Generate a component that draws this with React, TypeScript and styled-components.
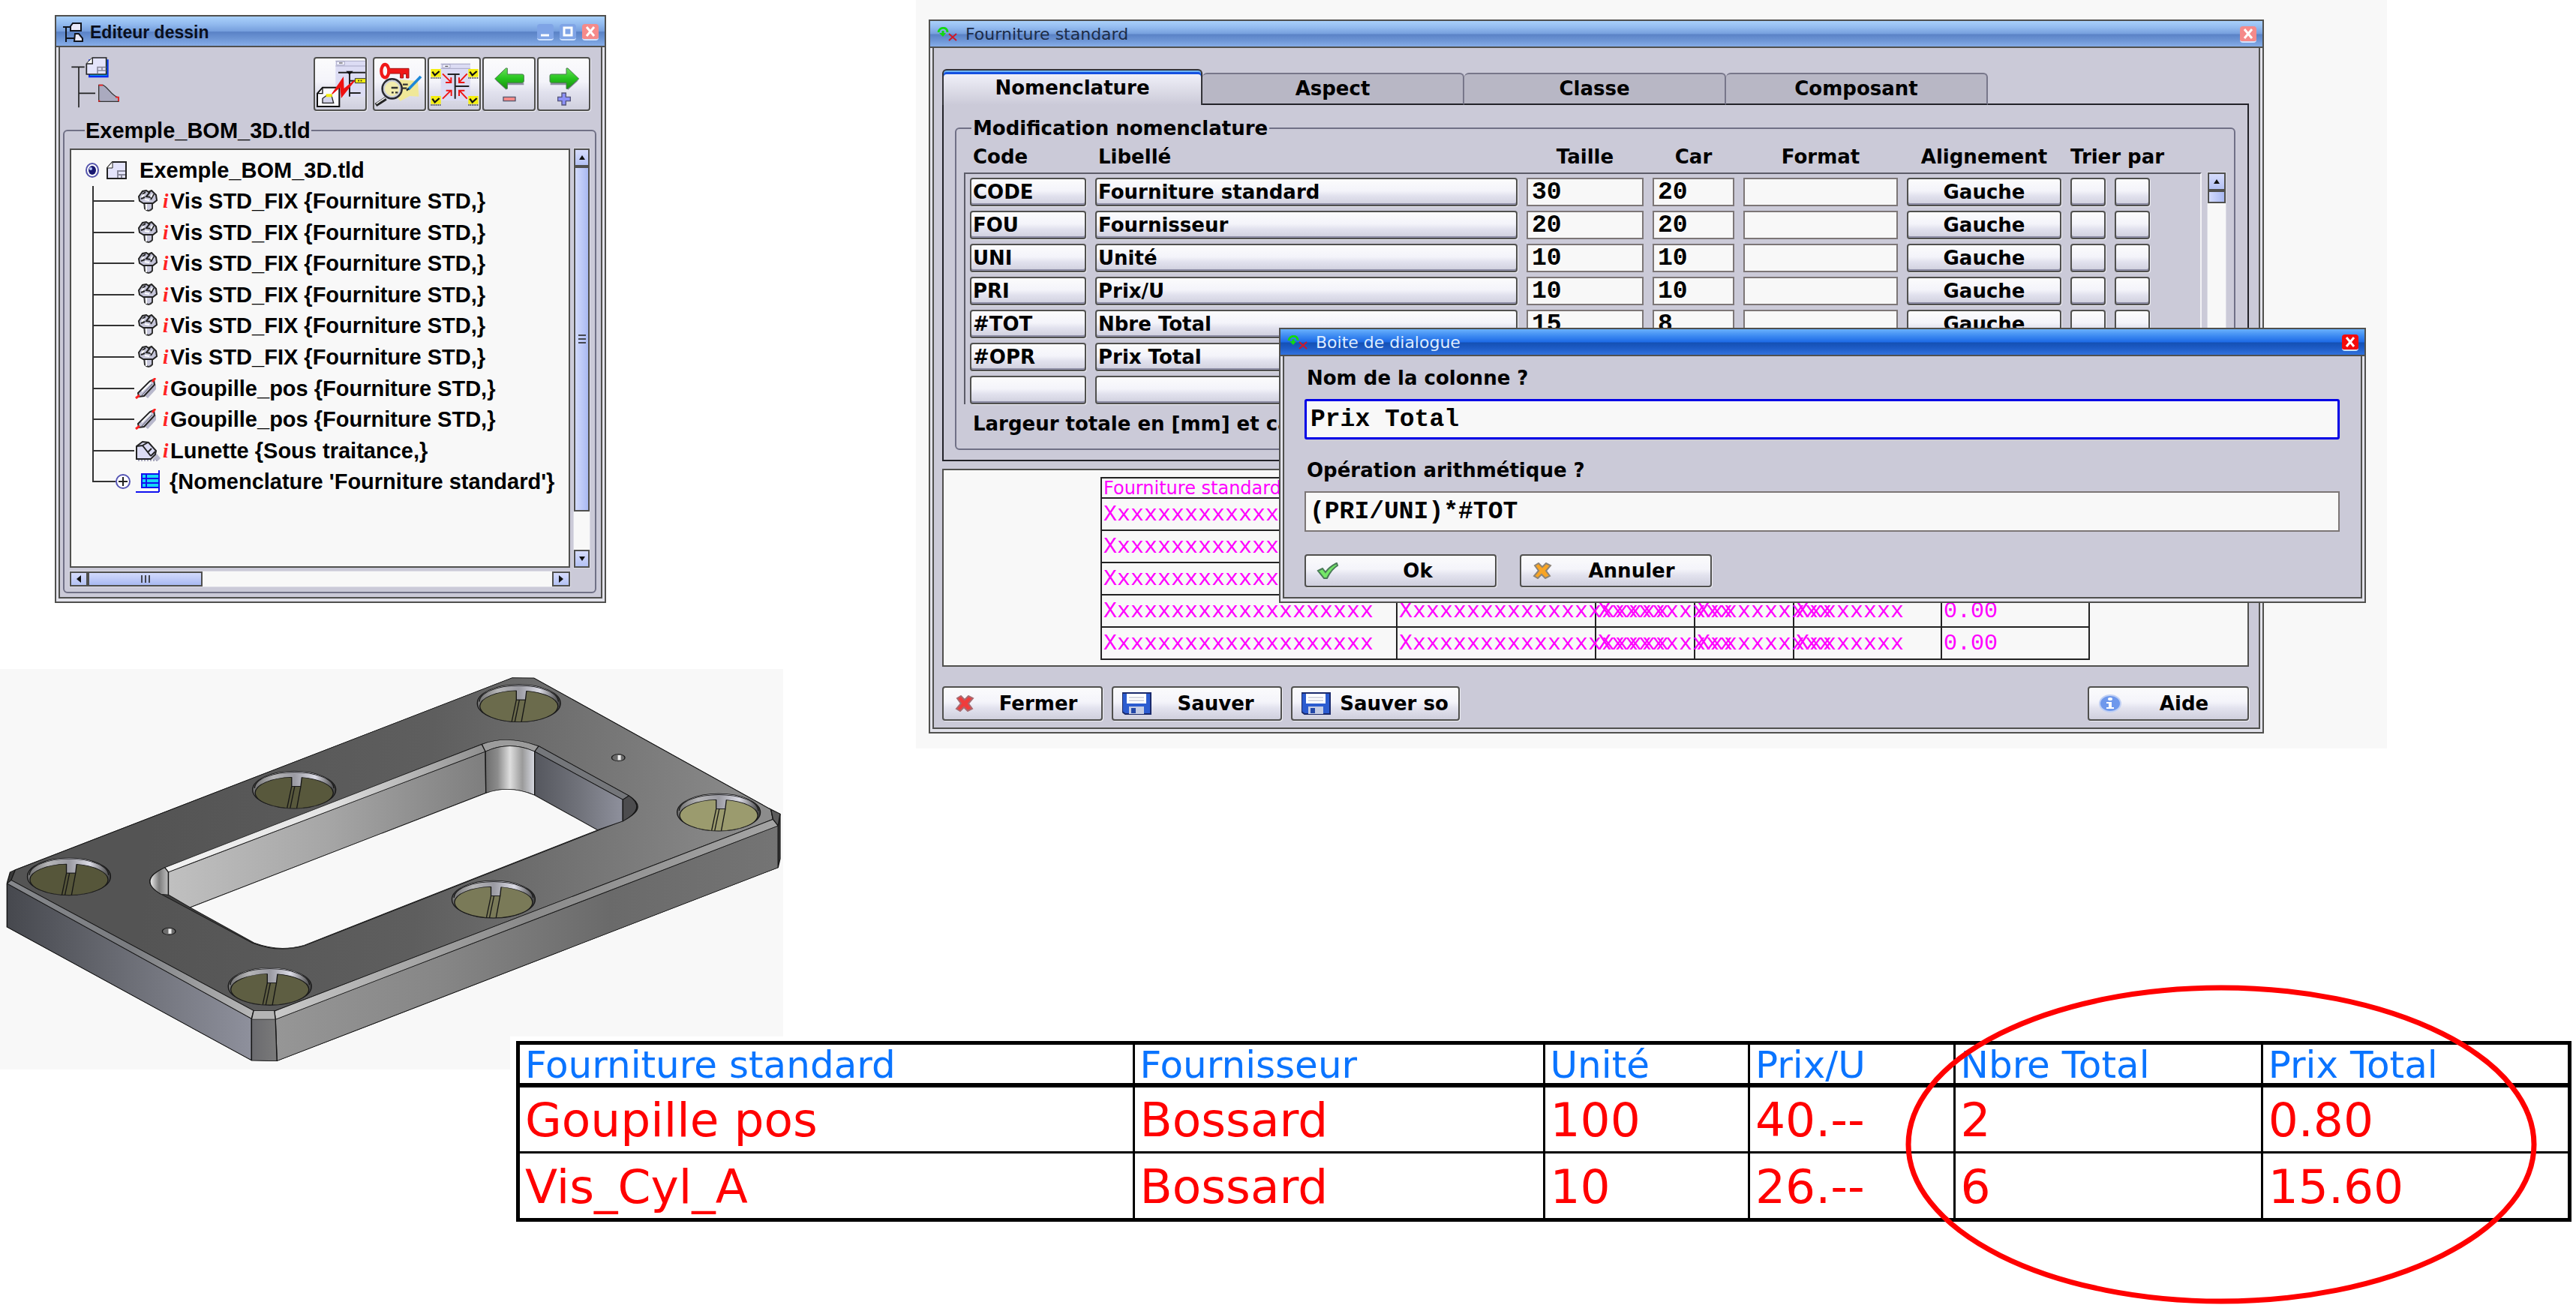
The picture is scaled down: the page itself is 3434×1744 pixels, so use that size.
import React from "react";
import styled, { createGlobalStyle, css } from "styled-components";

const GlobalStyle = createGlobalStyle`
  *, *::before, *::after { box-sizing: border-box; }
  body { margin: 0; background: #fff; color: #000; font-family: "DejaVu Sans", sans-serif; }
  button, input { font: inherit; color: inherit; margin: 0; }
  svg { display: block; flex: none; }
`;

const face = "#cbcad8";
const paper = "#f8f8f8";
const line = "#50504e";
const arial = `"Liberation Sans", Arial, sans-serif`;
const mono = `"Liberation Mono", "Courier New", monospace`;

/* ---------- page ---------- */

const Page = styled.main`
  overflow: hidden;
`;

const Workspace = styled.div`
  display: grid;
  grid-template-columns: 1221px minmax(0, 1fr);
  align-items: start;
`;

const LeftColumn = styled.div`
  display: flex;
  flex-direction: column;
  align-items: flex-start;
  gap: 88px;
  padding-top: 20px;
`;

const Stage = styled.section`
  position: relative;
  margin-right: 252px;
  padding: 26px 164px 20px 17px;
  background: ${paper};
`;

/* ---------- window frame ---------- */

const Frame = styled.section`
  display: flex;
  flex-direction: column;
  padding: 0 3px 4px;
  background: #e2e2ea;
  border: 2px solid ${line};
`;

const EditorFrame = styled(Frame)`
  width: 735px;
  margin-left: 73px;
`;

const DialogFrame = styled(Frame)`
  position: absolute;
  top: 437px;
  left: 484px;
  right: 28px;
`;

const TitleBar = styled.header<{ $active?: boolean; $tall?: boolean }>`
  display: flex;
  align-items: center;
  gap: 8px;
  height: ${(p) => (p.$tall ? 41 : 36)}px;
  margin: 0 -3px;
  padding: 2px 8px 0 9px;
  border-bottom: 2px solid ${line};
  background: ${(p) =>
    p.$active
      ? "linear-gradient(#69b0fc 0%, #3f8cf2 25%, #1d6ae6 50%, #1450b4 53%, #1e5cc6 75%, #3272de 100%)"
      : "linear-gradient(#a9d0fa 0%, #93bbef 25%, #769fdd 50%, #5a82c6 53%, #6c94d4 75%, #86ade8 100%)"};
`;

const Title = styled.h2<{ $active?: boolean; $bold?: boolean }>`
  flex: 1;
  margin: 0;
  font-size: 22px;
  font-weight: 400;
  line-height: 30px;
  color: ${(p) => (p.$active ? "#dcecff" : "#1c2c48")};
  ${(p) =>
    p.$bold &&
    css`
      font-family: ${arial};
      font-size: 23px;
      font-weight: 700;
      color: #0a0f1c;
    `}
`;

const WindowButton = styled.button<{ $tone: "blue" | "pale" | "red" }>`
  display: flex;
  align-items: center;
  justify-content: center;
  width: 22px;
  height: 22px;
  padding: 0;
  border: 0;
  border-bottom: 2px solid #cfe2ff;
  border-radius: 4px;
  background: ${(p) => ({ blue: "#7fa4e6", pale: "#f58a8a", red: "#f40b0b" })[p.$tone]};
`;

const Body = styled.div`
  display: flex;
  flex-direction: column;
  background: ${face};
  border: 2px solid ${line};
  border-top: 0;
`;

/* ---------- shared controls ---------- */

const raised = css`
  background: linear-gradient(#fbfbfc 0%, #f4f4fa 45%, #e2e2ee 65%, #cfcfdd 100%);
  border: 2px solid ${line};
  border-radius: 4px;
  box-shadow: 1px 1px 0 #eeeef4;
`;

const Group = styled.fieldset<{ $pad: string }>`
  min-width: 0;
  margin: 0;
  padding: ${(p) => p.$pad};
  border: 2px solid #707086;
  border-radius: 6px;
`;

const Track = styled.div<{ $row?: boolean }>`
  display: flex;
  flex-direction: ${(p) => (p.$row ? "row" : "column")};
  background: ${paper};
  outline: 1px solid #dcdce6;
`;

const ScrollButton = styled.button<{ $row?: boolean }>`
  display: flex;
  align-items: center;
  justify-content: center;
  width: ${(p) => (p.$row ? "24px" : "auto")};
  height: ${(p) => (p.$row ? "auto" : "24px")};
  padding: 0;
  border: 2px solid ${line};
  background: linear-gradient(#d6dcfc, #b4c2f4);
`;

const Thumb = styled.div<{ $row?: boolean; $size: number }>`
  display: flex;
  align-items: center;
  justify-content: center;
  width: ${(p) => (p.$row ? `${p.$size}px` : "auto")};
  height: ${(p) => (p.$row ? "auto" : `${p.$size}px`)};
  border: 2px solid ${line};
  background: ${(p) =>
    p.$row ? "linear-gradient(#d2dafc, #a9b9f2)" : "linear-gradient(90deg, #d2dafc, #a9b9f2)"};
`;

const Spring = styled.div`
  flex: 1;
`;

/* ---------- drawing editor ---------- */

const EditorTop = styled.div`
  display: flex;
  align-items: flex-start;
  justify-content: space-between;
  padding: 13px 14px 10px 14px;
`;

const Toolbar = styled.div`
  display: flex;
  gap: 2px;
`;

const Tool = styled.button<{ $apart?: boolean }>`
  ${raised}
  width: 71px;
  height: 72px;
  margin-right: ${(p) => (p.$apart ? 6 : 0)}px;
  padding: 0;
  overflow: hidden;
`;

const TreeGroup = styled.div`
  padding: 0 6px 5px 4px;
`;

const TreeLegend = styled.legend`
  margin-left: 20px;
  padding: 0 1px;
  font: 700 29px/32px ${arial};
`;

const TreeScroller = styled.div`
  display: grid;
  grid-template-columns: minmax(0, 1fr) 21px;
  grid-template-rows: 559px 20px;
  gap: 5px;
`;

const Tree = styled.ul`
  display: grid;
  grid-auto-rows: 1fr;
  margin: 0;
  padding: 6px 0 92px 18px;
  list-style: none;
  background: ${paper};
  border: 2px solid ${line};
  font: 700 29px/34px ${arial};
`;

const TreeItem = styled.li`
  display: flex;
  align-items: center;
  white-space: pre;
`;

const Branch = styled.span<{ $last?: boolean }>`
  align-self: stretch;
  width: ${(p) => (p.$last ? 31 : 56)}px;
  margin-left: 10px;
  background:
    linear-gradient(#333, #333) 0 50% / 100% 2px no-repeat,
    linear-gradient(#333, #333) 0 0 / 2px ${(p) => (p.$last ? "50%" : "100%")} no-repeat;
`;

const InfoMark = styled.i`
  width: 10px;
  font: italic 700 27px/34px "Liberation Serif", serif;
  color: #f22;
`;

/* ---------- nomenclature window ---------- */

const Tabs = styled.div`
  display: flex;
  align-items: flex-end;
  margin: 28px 0 -2px 11px;
  z-index: 1;
`;

const Tab = styled.button<{ $on?: boolean }>`
  width: 349px;
  height: 43px;
  padding: 0 0 2px;
  font-size: 26px;
  font-weight: 700;
  line-height: 30px;
  border: 2px solid #77768a;
  border-bottom: 2px solid #222228;
  border-left-width: 0;
  border-radius: 6px 6px 0 0;
  background: #b8b7c5;
  ${(p) =>
    p.$on &&
    css`
      width: 347px;
      height: 48px;
      padding: 0;
      border: 2px solid #333338;
      border-bottom: 0;
      box-shadow: inset 0 2px #6fb4f4, inset 0 5px #1450e0;
      background: linear-gradient(#f4f4fc, ${face});
    `}
`;

const Panel = styled.div`
  margin: 0 13px 0 11px;
  padding: 16px 16px 13px 15px;
  border: 2px solid #222228;
`;

const GridLegend = styled.legend`
  margin-left: 10px;
  padding: 0 2px;
  font-size: 26px;
  font-weight: 700;
  line-height: 30px;
`;

const GridArea = styled.div`
  display: flex;
  gap: 8px;
`;

const ColumnGrid = styled.table`
  display: block;
  flex: 1;
  min-width: 0;
  font-size: 26px;
  font-weight: 700;
  line-height: 30px;
`;

const gridColumns = css`
  display: grid;
  grid-template-columns: 155px minmax(0, 1fr) 156px 109px 206px 206px 47px 47px;
  column-gap: 12px;
`;

const GridHead = styled.thead`
  display: block;
`;

const HeadRow = styled.tr`
  ${gridColumns}
  align-items: center;
  height: 44px;
  padding: 2px 69px 0 8px;
`;

const HeadCell = styled.th<{ $left?: boolean; $wide?: boolean }>`
  padding: 0 0 0 ${(p) => (p.$left ? 4 : 0)}px;
  text-align: ${(p) => (p.$left || p.$wide ? "left" : "center")};
  white-space: nowrap;
  grid-column: ${(p) => (p.$wide ? "span 2" : "auto")};
`;

const GridBody = styled.tbody`
  display: grid;
  row-gap: 6px;
  padding: 5px 67px 0 6px;
  border: 2px solid #5c5c68;
  border-right-color: #f2f2f6;
  border-bottom: 0;
`;

const GridRow = styled.tr`
  ${gridColumns}
`;

const GridCell = styled.td`
  display: grid;
  padding: 0;
`;

const CellButton = styled.button<{ $left?: boolean }>`
  ${raised}
  height: 38px;
  padding: 0 2px;
  text-align: ${(p) => (p.$left ? "left" : "center")};
  line-height: 30px;
  box-shadow: inset 0 -2px #8c8ca4, 1px 1px 0 #eeeef4;
`;

const Entry = styled.input`
  width: 100%;
  min-width: 0;
  height: 38px;
  padding: 0 5px;
  border: 2px solid #7c7676;
  border-radius: 0;
  background: ${paper};
  font: 700 33px/34px ${mono};
  outline: 0;
`;

const SideTrack = styled(Track)`
  width: 24px;
  margin-top: 44px;
`;

const WidthNote = styled.p`
  margin: 0;
  padding-left: 12px;
  font-size: 26px;
  font-weight: 700;
  line-height: 52px;
  white-space: nowrap;
`;

const Preview = styled.div`
  margin: 10px 13px 0 11px;
  padding: 9px 0 7px 209px;
  border: 2px solid ${line};
  background: ${paper};
`;

const PreviewTable = styled.table`
  table-layout: fixed;
  width: 1317px;
  border-collapse: collapse;
  color: #ff00ff;
  font: 400 30px/34px ${mono};

  th, td {
    height: 43px;
    padding: 0 0 0 2px;
    border: 2px solid #222;
    text-align: left;
    white-space: nowrap;
  }

  th {
    height: 27px;
    font: 400 24px/24px "DejaVu Sans", sans-serif;
  }
`;

const Actions = styled.footer`
  display: flex;
  gap: 12px;
  padding: 26px 13px 9px 11px;
`;

const ActionButton = styled.button<{ $width: number; $height?: number }>`
  ${raised}
  display: flex;
  align-items: center;
  width: ${(p) => p.$width}px;
  height: ${(p) => p.$height ?? 46}px;
  padding: 0 2px 0 12px;
  font-size: 26px;
  font-weight: 700;
  line-height: 30px;
  white-space: nowrap;
`;

const ActionText = styled.span`
  flex: 1;
  text-align: center;
`;

/* ---------- dialog ---------- */

const Form = styled.form`
  display: flex;
  flex-direction: column;
  gap: 26px;
  padding: 14px 28px 13px 27px;
`;

const Field = styled.div`
  display: flex;
  flex-direction: column;
  gap: 13px;
`;

const FieldLabel = styled.label`
  padding-left: 3px;
  font-size: 26px;
  font-weight: 700;
  line-height: 30px;
`;

const TextBox = styled(Entry)<{ $focus?: boolean }>`
  height: 54px;
  border: ${(p) => (p.$focus ? "3px solid #0000e6" : "2px solid #7c7676")};
  border-radius: ${(p) => (p.$focus ? 3 : 0)}px;
`;

const FormActions = styled.div`
  display: flex;
  gap: 31px;
  padding-top: 4px;
`;

/* ---------- result table ---------- */

const Result = styled.section`
  position: relative;
  margin: -44px 0 0 680px;
  padding: 6px 6px 113px 8px;
  background: #fff;
`;

const ResultTable = styled.table`
  table-layout: fixed;
  width: 100%;
  border-collapse: collapse;
  border: 5px solid #000;

  th, td {
    padding: 4px 0 0 7px;
    border: 3px solid #000;
    font-weight: 400;
    text-align: left;
    white-space: nowrap;
  }

  th {
    height: 56px;
    border-bottom-width: 6px;
    font-size: 50px;
    line-height: 44px;
    color: #0a74ff;
  }

  td {
    height: 90px;
    font-size: 63px;
    line-height: 60px;
    color: #f00;
  }
`;

const Circle = styled.svg`
  position: absolute;
  top: -69px;
  right: 51px;
`;

/* ---------- icons ---------- */

const WindowGlyph = ({ kind }: { kind: "min" | "max" | "close" }) => (
  <svg width="18" height="18" viewBox="0 0 18 18" fill="none" stroke="#fff" strokeWidth="3">
    {kind === "min" && <path d="M3 14h11" />}
    {kind === "max" && <rect x="4" y="4" width="10" height="10" />}
    {kind === "close" && <path d="M4 3l10 12M14 3L4 15" />}
  </svg>
);

const EditorMark = () => (
  <svg width="28" height="26" viewBox="0 0 28 26" stroke="#10141c" strokeWidth="2">
    <path d="M0 6h10M4 6v20M4 21h12" fill="none" />
    <path d="M13 1h11v10H10V5z" fill="#e8e8f8" />
    <path d="M16 15h5l5 6v4H15z" fill="#e8e8f8" />
  </svg>
);

const SwapMark = () => (
  <svg width="30" height="20" viewBox="0 0 30 20" fill="none">
    <path d="M2 7c1-7 12-8 12 0M8 5v6" stroke="#12d812" strokeWidth="3" />
    <path d="M3 8h9l-4 5z" fill="#12d812" />
    <path d="M16 9l10 9M26 9l-10 9" stroke="#d01828" strokeWidth="2" />
  </svg>
);

const StructureIcon = () => (
  <svg width="66" height="68" viewBox="42 178 198 204">
    <path d="M46 218h52M75 218v162M75 323h66" stroke="#222" strokeWidth="5" fill="none" />
    <path d="M114 188h80v72h-80z" fill="#0a2cf0" />
    <path d="M120 188h68v64h-68z" fill="#12c8f0" />
    <path d="M130 181h55v66h-79v-42z" fill="#e4e4fb" stroke="#222" strokeWidth="5" />
    <path d="M106 205h24v-24" fill="#fff" stroke="#222" strokeWidth="4" />
    <path d="M150 245v-26h34M150 232h34M168 219v13" stroke="#8a8a9c" strokeWidth="5" fill="none" />
    <path d="M155 290h16C192 298 206 334 234 340V356H155z" fill="#aaaabf" stroke="#333" strokeWidth="4" />
    <path d="M155 291h16M153 354h7M222 339h12v16" stroke="#e22" strokeWidth="5" fill="none" />
  </svg>
);

const CheckFlag = ({ x, y }: { x: number; y: number }) => (
  <g>
    <path d={`M${x} ${y}h40v32h-40z`} fill="#f4ee10" />
    <path d={`M${x} ${y + 36}h40`} stroke="#222" strokeWidth="4" strokeDasharray="4 3" />
    <path d={`M${x + 6} ${y + 11}l10 14 18-16`} stroke="#111" strokeWidth="7" fill="none" />
  </g>
);

const LinkIcon = () => (
  <svg width="67" height="68" viewBox="36 36 201 204">
    <path d="M118 46h124v142h-124z" fill="#dcdcf4" />
    <path d="M118 46h124M118 66h124" stroke="#a8a8c4" strokeWidth="3" />
    <path d="M122 48h32v14h-32z" fill="#f4f4ff" stroke="#9090b0" strokeWidth="2" />
    <path d="M132 54h14" stroke="#333" strokeWidth="3" />
    <path d="M129 92h110M174 92v96M174 125h24M174 174h44" stroke="#222" strokeWidth="6" fill="none" />
    <path d="M160 86h28l-14 16z" fill="#111" />
    <path d="M196 116h46v18h-46z" fill="#f4ee10" stroke="#333" strokeWidth="3" />
    <path d="M208 125h18" stroke="#222" strokeWidth="5" strokeDasharray="5 5" />
    <path d="M66 152h67v76H45v-52z" fill="#fafafe" stroke="#111" strokeWidth="6" />
    <path d="M45 176h21v-24" fill="none" stroke="#111" strokeWidth="4" />
    <path d="M66 214v-18l16-12h20l8 30z" fill="#d4d4ea" stroke="#222" strokeWidth="4" />
    <path d="M80 178h24v12H80z" fill="#f4ee10" />
    <path d="M104 178L148 114 150 160 194 124 142 190 138 148z" fill="#ee1010" stroke="#ee1010" strokeWidth="4" />
  </svg>
);

const SearchIcon = () => (
  <svg width="67" height="68" viewBox="276 36 201 204">
    <path d="M378 120l72 6 4 62-36-2-38 20-14-16z" fill="#f0e898" />
    <path d="M334 76h80v38h-10V98h-12v16h-12V96h-46z" fill="#f01818" stroke="#a01010" strokeWidth="3" />
    <ellipse cx="319" cy="86" rx="15" ry="26" fill="none" stroke="#f01818" strokeWidth="13" />
    <path d="M322 196l-40 26" stroke="#222" strokeWidth="15" />
    <path d="M320 193l-36 24" stroke="#fff" strokeWidth="4" />
    <circle cx="347" cy="157" r="39" fill="#f2ecae" stroke="#2a2a34" strokeWidth="8" />
    <circle cx="347" cy="157" r="32" fill="none" stroke="#c8cce0" strokeWidth="5" />
    <path d="M344 153h26M345 172h8M360 172h10M390 140h20M390 155h16" stroke="#333" strokeWidth="7" />
    <path d="M462 108l-50 52" stroke="#1c88d8" strokeWidth="11" />
    <path d="M414 156l-9 8" stroke="#123" strokeWidth="7" />
  </svg>
);

const CollapseIcon = () => (
  <svg width="67" height="68" viewBox="494 36 201 204">
    <path d="M541 56h118v148H541z" fill="#dcdcf4" />
    <path d="M541 58h118M541 76h118" stroke="#a8a8c4" strokeWidth="3" />
    <path d="M548 60h30v13h-30z" fill="#f4f4ff" stroke="#9090b0" strokeWidth="2" />
    <path d="M558 67h12" stroke="#333" strokeWidth="3" />
    <path d="M568 99h48M598 99v98M598 147h56" stroke="#222" strokeWidth="6" fill="none" />
    <g stroke="#ee1616" strokeWidth="6" fill="none">
      <path d="M548 97l34 34M582 112v20h-22" />
      <path d="M646 97l-32 34M614 112v20h22" />
      <path d="M548 197l34-34M562 164h21v22" />
      <path d="M646 197l-32-34M636 164h-22v22" />
    </g>
    <CheckFlag x={501} y={78} />
    <CheckFlag x={651} y={78} />
    <CheckFlag x={501} y={186} />
    <CheckFlag x={651} y={186} />
  </svg>
);

const Green = ({ id }: { id: string }) => (
  <linearGradient id={id} x1="0" y1="0" x2="0" y2="1">
    <stop offset="0" stopColor="#68e058" />
    <stop offset=".5" stopColor="#26c41e" />
    <stop offset="1" stopColor="#18900e" />
  </linearGradient>
);

const BackIcon = () => (
  <svg width="67" height="68" viewBox="710 36 201 204">
    <defs><Green id="greenBack" /></defs>
    <path d="M758 124l42 38v-20h70v-8z" fill="#8e8ea2" />
    <path d="M754 117l44-42h6v24h60q6 0 6 6v22q0 6-6 6h-60v24h-6z" fill="url(#greenBack)" stroke="#4a7a50" strokeWidth="3" />
    <path d="M788 190h48v16h-48z" fill="#f48a88" stroke="#55556a" strokeWidth="4" />
  </svg>
);

const ForwardIcon = () => (
  <svg width="67" height="68" viewBox="927 36 201 204">
    <defs><Green id="greenNext" /></defs>
    <path d="M1086 124l-42 38v-20h-70v-8z" fill="#8e8ea2" />
    <path d="M1088 117l-44-42h-6v24h-60q-6 0-6 6v22q0 6 6 6h60v24h6z" fill="url(#greenNext)" stroke="#4a7a50" strokeWidth="3" />
    <path d="M1020 174h16v16h18v16h-18v16h-16v-16h-16v-16h16z" fill="#8c90f6" stroke="#55557a" strokeWidth="4" />
  </svg>
);

const RootMark = () => (
  <svg width="20" height="22" viewBox="0 0 20 22">
    <ellipse cx="10" cy="11" rx="8" ry="9" fill="#fff" stroke="#5454ac" strokeWidth="2" />
    <ellipse cx="10" cy="11" rx="5" ry="6" fill="#181870" />
    <circle cx="8" cy="9" r="2" fill="#b8c8f8" />
  </svg>
);

const SheetMark = () => (
  <svg width="45" height="24" viewBox="-9 0 45 24">
    <path d="M8 1h18v22H1V9z" fill="#e4e4fb" stroke="#222" strokeWidth="2" />
    <path d="M1 9h7V1" fill="#fff" stroke="#222" />
    <path d="M15 22v-9h10M15 18h10M20 18v4" stroke="#8a8a9c" strokeWidth="2" fill="none" />
  </svg>
);

const ScrewMark = () => (
  <svg width="38" height="30" viewBox="-4 0 38 30">
    <path d="M9 16h11v9q-5 6-10 0z" fill="#c8c8dc" stroke="#333" strokeWidth="2" />
    <path d="M12 18v9" stroke="#fff" strokeWidth="2" />
    <path d="M2 9l5-7 5-1 3 2 4-2 6 6 1 7-5 4H8l-5-3z" fill="#c4c4d8" stroke="#222" strokeWidth="2" />
    <path d="M7 6l4-3M17 3l-5 6 6 1M22 6l-4 7M5 12l5-2" stroke="#222" strokeWidth="2" fill="none" />
    <path d="M6 10l3-4M20 6l-2 4M10 13l6 1" stroke="#fff" strokeWidth="2" />
  </svg>
);

const PinMark = () => (
  <svg width="38" height="28" viewBox="-2 0 38 28">
    <path d="M12 24L27 8v7L16 27z" fill="#b8b8cc" />
    <path d="M3 20L19 4l5-2 1 7L11 24l-7 1z" fill="#c4c4d8" stroke="#222" strokeWidth="2" />
    <path d="M8 18L20 6" stroke="#fff" strokeWidth="2" />
    <path d="M8 23L22 8" stroke="#55556a" strokeWidth="1" />
    <path d="M0 27l5-4M22 5l4-5" stroke="#f22" strokeWidth="3" />
  </svg>
);

const PlateMark = () => (
  <svg width="38" height="28" viewBox="-2 0 38 28">
    <path d="M22 26l6-8 5 6-3 3z" fill="#b8b8cc" />
    <path d="M1 8l8-6 8 1 10 11-1 5-6 6H1z" fill="#dcdcf4" stroke="#222" strokeWidth="2" />
    <path d="M1 8l8-1L20 21M9 7l7-4M20 21l6-6M16 16l5-5" stroke="#222" strokeWidth="2" fill="none" />
    <path d="M3 27h26" stroke="#a8a8bc" strokeDasharray="2 2" strokeWidth="2" />
  </svg>
);

const TableMark = () => (
  <svg width="64" height="30" viewBox="1 0 64 30">
    <circle cx="11" cy="15" r="9" fill="#fff" stroke="#5454b4" strokeWidth="2" />
    <path d="M5 15h12M11 9v12" stroke="#222" strokeWidth="2" />
    <path d="M36 5h23v18H36z" fill="#16d6f4" stroke="#1010f0" strokeWidth="2" />
    <path d="M37 11h21M37 17h21M42 5v18" stroke="#1010f0" strokeWidth="2" />
    <path d="M59 0v29M28 29h31" stroke="#1010f0" strokeWidth="2" />
  </svg>
);

const Arrow = ({ dir }: { dir: "up" | "down" | "left" | "right" }) => (
  <svg width="12" height="12" viewBox="0 0 12 12">
    <path
      fill="#111"
      d={{ up: "M6 3l4 6H2z", down: "M6 9l4-6H2z", left: "M3 6l6-5v10z", right: "M9 6L3 1v10z" }[dir]}
    />
  </svg>
);

const Grip = ({ row }: { row?: boolean }) => (
  <svg width="14" height="14" viewBox="0 0 14 14" stroke="#44464e" strokeWidth="2">
    <path d={row ? "M2 2v10M7 2v10M12 2v10" : "M2 2h10M2 7h10M2 12h10"} />
  </svg>
);

const CrossMark = ({ fill, edge }: { fill: string; edge: string }) => (
  <svg width="32" height="22" viewBox="-2 0 32 22">
    <path d="M4 4l5-3 5 5 5-5 6 3-6 7 5 7-6 3-5-5-5 5-5-3 6-7z" fill={fill} stroke={edge} strokeWidth="2" />
  </svg>
);

const TickMark = () => (
  <svg width="36" height="22" viewBox="0 0 36 22">
    <path d="M4 11l6-3 4 5q6-8 15-12l1 3q-9 6-14 17h-4z" fill="#74e868" stroke="#4a7a58" strokeWidth="2" />
  </svg>
);

const DiskMark = () => (
  <svg width="40" height="30" viewBox="1 0 40 30">
    <path d="M1 1h38v28H5l-4-3z" fill="#2c5cd0" stroke="#1a2a6c" strokeWidth="2" />
    <path d="M7 2h26v13H7z" fill="#fff" />
    <path d="M10 7h20M10 11h20" stroke="#b0b4c8" strokeWidth="1" />
    <path d="M10 19h20v10H10z" fill="#c4cce4" />
    <path d="M13 21h6v7h-6z" fill="#2448a8" />
  </svg>
);

const InfoIcon = () => (
  <svg width="32" height="26" viewBox="0 0 32 26">
    <ellipse cx="16" cy="13" rx="14" ry="11" fill="#6e98ec" stroke="#c0d0f4" strokeWidth="2" />
    <ellipse cx="16" cy="7" rx="3" ry="2" fill="#fff" />
    <path d="M11 11h7v7h3v2H11v-2h3v-5h-3z" fill="#fff" />
  </svg>
);

/* ---------- machined plate ---------- */

const Stops = ({ id, colors }: { id: string; colors: string[] }) => (
  <linearGradient id={id}>
    {colors.map((c, i) => (
      <stop key={i} offset={i / (colors.length - 1)} stopColor={c} />
    ))}
  </linearGradient>
);

const screws: [number, number, string][] = [
  [1023, 165, "#6b6b4c"],
  [580, 488, "#58583c"],
  [136, 812, "#56563a"],
  [973, 897, "#7a7a58"],
  [532, 1222, "#5e5e42"],
  [1417, 572, "#9b9b6e"],
];

const Screw = ({ x, y, fill }: { x: number; y: number; fill: string }) => (
  <g transform={`translate(${x} ${y})`}>
    <ellipse rx="82" ry="70" fill="url(#bore)" />
    <path d="M-78 -6a78 60 0 0 1 156 0" fill="none" />
    <path d="M-77 10a77 59 0 0 0 154 0 77 59 0 0 0 -62 -56 l-2 33 h-18 v-34 a77 59 0 0 0 -72 57z" fill={fill} />
    <path d="M-5 -13L-14 68M1 -13L-8 69M13 -13L5 69M-5 -13h18" fill="none" />
  </g>
);

const Plate = () => (
  <svg
    width="1044"
    height="534"
    viewBox="0 37 1544 1495"
    preserveAspectRatio="none"
    role="img"
    aria-label="Lunette"
    stroke="#161616"
    strokeWidth="2"
    strokeLinejoin="round"
  >
    <defs>
      <linearGradient id="top" gradientUnits="userSpaceOnUse" x1="300" y1="560" x2="1500" y2="620">
        <stop offset="0" stopColor="#545454" />
        <stop offset=".45" stopColor="#5e5e5e" />
        <stop offset="1" stopColor="#8c8c8c" />
      </linearGradient>
      <Stops id="front" colors={["#969696", "#868686", "#6a6a6a", "#747474"]} />
      <Stops id="side" colors={["#46484e", "#6c6e76", "#8e909c"]} />
      <Stops id="corner" colors={["#6a6a6e", "#7a7a7a"]} />
      <Stops id="bevelR" colors={["#c8c8c8", "#8a8a8a", "#a4a4a4"]} />
      <Stops id="bevelL" colors={["#86888c", "#7a7c80", "#b8b8b8"]} />
      <Stops id="wall" colors={["#c0c0c0", "#a6a6a6", "#7e7e7e"]} />
      <Stops id="rim" colors={["#f2f2f2", "#e4e4e4", "#8e8e8e"]} />
      <Stops id="round" colors={["#6e6e6e", "#8c8c8c", "#dedede", "#9a9a9a", "#d6d8e0"]} />
      <Stops id="wallR" colors={["#55575e", "#70727a", "#8e909c"]} />
      <Stops id="turn" colors={["#f0f0f0", "#7c7c7c", "#c0c0c0"]} />
      <Stops id="bore" colors={["#6c6c6c", "#b6b6b8", "#9a9aa2", "#dcdce6", "#3c3c3c"]} />
    </defs>

    <path d="M14 835L20 795 30 787 1010 70 1053 71 1515 556 1538 578V745L1534 778 546 1500 496 1498 14 1000z" fill="#3a3a3a" />
    <path d="M14 838L496 1342V1498L14 1000z" fill="url(#side)" />
    <path d="M543 1345L1534 622V778L546 1500z" fill="url(#front)" />
    <path d="M496 1342H543L546 1500 496 1498z" fill="url(#corner)" />
    <path d="M30 787L1010 70 1053 71 1520 562 1524 598 541 1314 500 1312 22 825z" fill="url(#top)" />
    <path d="M22 825L500 1312 496 1342 14 838z" fill="url(#bevelL)" />
    <path d="M541 1314L1524 598 1534 622 543 1345z" fill="url(#bevelR)" />
    <path d="M500 1312H541L543 1345H496z" fill="#b4b4b4" />
    <path d="M1520 562L1538 578 1534 622 1524 598z" fill="#5c5c5c" />

    <path
      d="M950 318Q1000 282 1062 325L1240 510Q1282 560 1222 608L600 1070Q550 1098 498 1060L315 875Q272 822 325 778z"
      fill="#3e3e3e"
    />
    <path d="M325 778Q270 826 318 878L332 880V795z" fill="url(#turn)" />
    <path d="M332 795L957 345 958 500 375 927 332 880z" fill="url(#wall)" />
    <path d="M325 778L950 318 957 345 332 795z" fill="url(#rim)" />
    <path d="M950 318Q1000 282 1062 325L1054 345Q1005 304 957 345z" fill="#9c9c9c" />
    <path d="M957 345Q1005 304 1054 345V508Q1005 468 958 500z" fill="url(#round)" />
    <path d="M1062 325L1240 510 1228 525 1054 345z" fill="#74767a" />
    <path d="M1054 345L1228 525V605L1178 638 1054 508z" fill="url(#wallR)" />
    <path d="M1240 510Q1276 556 1228 605V525z" fill="#4c4c4e" />
    <path d="M958 500Q1005 468 1054 508L1178 638 600 1068Q550 1094 502 1060L375 927z" fill={paper} />

    {screws.map(([x, y, fill]) => (
      <Screw key={`${x}-${y}`} x={x} y={y} fill={fill} />
    ))}
    {[[1219, 368], [333, 1016]].map(([x, y]) => (
      <g key={x}>
        <circle cx={x} cy={y} r="13" fill="#6c6c6c" />
        <path d={`M${x + 2} ${y - 9}v18`} stroke="#f0f0f0" strokeWidth="6" />
      </g>
    ))}
  </svg>
);

const PlateFigure = styled.figure`
  margin: 0;
  background: ${paper};
`;

/* ---------- data ---------- */

const parts = [
  ...Array.from({ length: 6 }, () => ({ icon: <ScrewMark />, name: "Vis STD_FIX {Fourniture STD,}" })),
  { icon: <PinMark />, name: "Goupille_pos {Fourniture STD,}" },
  { icon: <PinMark />, name: "Goupille_pos {Fourniture STD,}" },
  { icon: <PlateMark />, name: "Lunette {Sous traitance,}" },
];

const columns = [
  ["CODE", "Fourniture standard", "30", "20"],
  ["FOU", "Fournisseur", "20", "20"],
  ["UNI", "Unité", "10", "10"],
  ["PRI", "Prix/U", "10", "10"],
  ["#TOT", "Nbre Total", "15", "8"],
  ["#OPR", "Prix Total", "", ""],
  ["", "", "", ""],
];

const previewWidths = [394, 265, 132, 132, 197, 197];
const filler = (n: number) => "X" + "x".repeat(n - 1);
const previewRow = [filler(20), filler(20), filler(10), filler(10), filler(8), "0.00"];

const resultWidths = ["30%", "20%", "10%", "10%", "15%", "15%"];
const resultHead = ["Fourniture standard", "Fournisseur", "Unité", "Prix/U", "Nbre Total", "Prix Total"];
const resultRows = [
  ["Goupille pos", "Bossard", "100", "40.--", "2", "0.80"],
  ["Vis_Cyl_A", "Bossard", "10", "26.--", "6", "15.60"],
];

/* ---------- windows ---------- */

const EditorWindow = () => (
  <EditorFrame>
    <TitleBar $tall>
      <EditorMark />
      <Title $bold>Editeur dessin</Title>
      <WindowButton $tone="blue" aria-label="Réduire"><WindowGlyph kind="min" /></WindowButton>
      <WindowButton $tone="blue" aria-label="Agrandir"><WindowGlyph kind="max" /></WindowButton>
      <WindowButton $tone="pale" aria-label="Fermer"><WindowGlyph kind="close" /></WindowButton>
    </TitleBar>
    <Body>
      <EditorTop>
        <StructureIcon />
        <Toolbar>
          <Tool $apart aria-label="Lier"><LinkIcon /></Tool>
          <Tool aria-label="Rechercher"><SearchIcon /></Tool>
          <Tool aria-label="Regrouper"><CollapseIcon /></Tool>
          <Tool aria-label="Reculer"><BackIcon /></Tool>
          <Tool aria-label="Avancer"><ForwardIcon /></Tool>
        </Toolbar>
      </EditorTop>
      <TreeGroup>
        <Group $pad="8px 7px 7px">
          <TreeLegend>Exemple_BOM_3D.tld</TreeLegend>
          <TreeScroller>
            <Tree>
              <TreeItem><RootMark /><SheetMark /> Exemple_BOM_3D.tld</TreeItem>
              {parts.map((p, i) => (
                <TreeItem key={i}>
                  <Branch />
                  {p.icon}
                  <InfoMark>i</InfoMark>
                  {p.name}
                </TreeItem>
              ))}
              <TreeItem>
                <Branch $last />
                <TableMark />
                {" {Nomenclature 'Fourniture standard'}"}
              </TreeItem>
            </Tree>
            <Track>
              <ScrollButton aria-label="Haut"><Arrow dir="up" /></ScrollButton>
              <Thumb $size={460}><Grip /></Thumb>
              <Spring />
              <ScrollButton aria-label="Bas"><Arrow dir="down" /></ScrollButton>
            </Track>
            <Track $row>
              <ScrollButton $row aria-label="Gauche"><Arrow dir="left" /></ScrollButton>
              <Thumb $row $size={153}><Grip row /></Thumb>
              <Spring />
              <ScrollButton $row aria-label="Droite"><Arrow dir="right" /></ScrollButton>
            </Track>
          </TreeScroller>
        </Group>
      </TreeGroup>
    </Body>
  </EditorFrame>
);

const SupplyWindow = () => (
  <Frame>
    <TitleBar>
      <SwapMark />
      <Title>Fourniture standard</Title>
      <WindowButton $tone="pale" aria-label="Fermer la fenêtre"><WindowGlyph kind="close" /></WindowButton>
    </TitleBar>
    <Body>
      <Tabs role="tablist">
        <Tab $on role="tab" aria-selected>Nomenclature</Tab>
        <Tab role="tab">Aspect</Tab>
        <Tab role="tab">Classe</Tab>
        <Tab role="tab">Composant</Tab>
      </Tabs>
      <Panel>
        <Group $pad="0 11px 7px 10px">
          <GridLegend>Modification nomenclature</GridLegend>
          <GridArea>
            <ColumnGrid>
              <GridHead>
                <HeadRow>
                  <HeadCell $left>Code</HeadCell>
                  <HeadCell $left>Libellé</HeadCell>
                  <HeadCell>Taille</HeadCell>
                  <HeadCell>Car</HeadCell>
                  <HeadCell>Format</HeadCell>
                  <HeadCell>Alignement</HeadCell>
                  <HeadCell $wide>Trier par</HeadCell>
                </HeadRow>
              </GridHead>
              <GridBody>
                {columns.map(([code, label, size, chars], i) => (
                  <GridRow key={i}>
                    <GridCell><CellButton $left aria-label={`Code ${i + 1}`}>{code}</CellButton></GridCell>
                    <GridCell><CellButton $left aria-label={`Libellé ${i + 1}`}>{label}</CellButton></GridCell>
                    <GridCell><Entry aria-label={`Taille ${i + 1}`} defaultValue={size} /></GridCell>
                    <GridCell><Entry aria-label={`Car ${i + 1}`} defaultValue={chars} /></GridCell>
                    <GridCell><Entry aria-label={`Format ${i + 1}`} defaultValue="" /></GridCell>
                    <GridCell><CellButton aria-label={`Alignement ${i + 1}`}>{i < 5 ? "Gauche" : ""}</CellButton></GridCell>
                    <GridCell><CellButton aria-label={`Tri A ${i + 1}`} /></GridCell>
                    <GridCell><CellButton aria-label={`Tri B ${i + 1}`} /></GridCell>
                  </GridRow>
                ))}
              </GridBody>
            </ColumnGrid>
            <SideTrack>
              <ScrollButton aria-label="Monter"><Arrow dir="up" /></ScrollButton>
              <Thumb $size={17} />
            </SideTrack>
          </GridArea>
          <WidthNote>Largeur totale en [mm] et ca</WidthNote>
        </Group>
      </Panel>
      <Preview>
        <PreviewTable>
          <colgroup>
            {previewWidths.map((w, i) => <col key={i} width={w} />)}
          </colgroup>
          <thead>
            <tr>
              <th>Fourniture standard</th>
              <th /><th /><th /><th /><th />
            </tr>
          </thead>
          <tbody>
            {[0, 1, 2, 3, 4].map((r) => (
              <tr key={r}>{previewRow.map((t, i) => <td key={i}>{t}</td>)}</tr>
            ))}
          </tbody>
        </PreviewTable>
      </Preview>
      <Actions>
        <ActionButton $width={214}><CrossMark fill="#f03c3c" edge="#a86a70" /><ActionText>Fermer</ActionText></ActionButton>
        <ActionButton $width={227}><DiskMark /><ActionText>Sauver</ActionText></ActionButton>
        <ActionButton $width={225}><DiskMark /><ActionText>Sauver so</ActionText></ActionButton>
        <Spring />
        <ActionButton $width={215}><InfoIcon /><ActionText>Aide</ActionText></ActionButton>
      </Actions>
    </Body>
  </Frame>
);

const FormulaDialog = () => (
  <DialogFrame role="dialog" aria-label="Boite de dialogue">
    <TitleBar $active>
      <SwapMark />
      <Title $active>Boite de dialogue</Title>
      <WindowButton $tone="red" aria-label="Fermer le dialogue"><WindowGlyph kind="close" /></WindowButton>
    </TitleBar>
    <Body>
      <Form>
        <Field>
          <FieldLabel htmlFor="name">Nom de la colonne ?</FieldLabel>
          <TextBox id="name" $focus defaultValue="Prix Total" />
        </Field>
        <Field>
          <FieldLabel htmlFor="formula">Opération arithmétique ?</FieldLabel>
          <TextBox id="formula" defaultValue="(PRI/UNI)*#TOT" />
        </Field>
        <FormActions>
          <ActionButton type="button" $width={256} $height={44}><TickMark /><ActionText>Ok</ActionText></ActionButton>
          <ActionButton type="button" $width={256} $height={44}><CrossMark fill="#f8a424" edge="#8c8478" /><ActionText>Annuler</ActionText></ActionButton>
        </FormActions>
      </Form>
    </Body>
  </DialogFrame>
);

export default function App() {
  return (
    <Page>
      <GlobalStyle />
      <Workspace>
        <LeftColumn>
          <EditorWindow />
          <PlateFigure><Plate /></PlateFigure>
        </LeftColumn>
        <Stage>
          <SupplyWindow />
          <FormulaDialog />
        </Stage>
      </Workspace>
      <Result>
        <ResultTable>
          <colgroup>
            {resultWidths.map((w, i) => <col key={i} width={w} />)}
          </colgroup>
          <thead>
            <tr>{resultHead.map((t) => <th key={t}>{t}</th>)}</tr>
          </thead>
          <tbody>
            {resultRows.map((row) => (
              <tr key={row[0]}>{row.map((t, i) => <td key={i}>{t}</td>)}</tr>
            ))}
          </tbody>
        </ResultTable>
        <Circle width="843" height="427" viewBox="0 0 843 427" aria-hidden="true">
          <ellipse cx="421" cy="213" rx="417" ry="209" fill="none" stroke="#f00" strokeWidth="7" />
        </Circle>
      </Result>
    </Page>
  );
}
